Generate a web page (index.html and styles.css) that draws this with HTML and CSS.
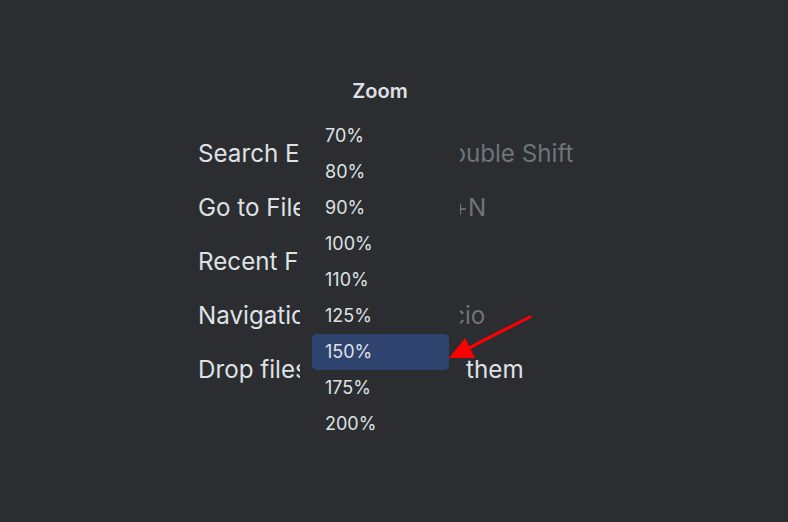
FILE: index.html
```html
<!DOCTYPE html>
<html>
<head>
<meta charset="utf-8">
<link rel="stylesheet" href="styles.css">
</head>
<body>
<div class="screen">
  <div class="hints">
    <div class="hint"><span class="label">Search Everywhere</span><span class="key">Double Shift</span></div>
    <div class="hint"><span class="label">Go to File</span><span class="key">Ctrl+Mayús+N</span></div>
    <div class="hint"><span class="label">Recent Files</span><span class="key">Ctrl+E</span></div>
    <div class="hint"><span class="label">Navigation Bar</span><span class="key">Alt+Inicio</span></div>
    <div class="hint"><span class="label">Drop files here to open them</span></div>
  </div>

  <div class="popup">
    <div class="popup-title">Zoom</div>
    <ul class="menu">
      <li class="item">70%</li>
      <li class="item">80%</li>
      <li class="item">90%</li>
      <li class="item">100%</li>
      <li class="item">110%</li>
      <li class="item">125%</li>
      <li class="item selected">150%</li>
      <li class="item">175%</li>
      <li class="item">200%</li>
    </ul>
  </div>

  <svg class="arrow" width="788" height="522" viewBox="0 0 788 522">
    <path d="M530 317 C 512 326, 480 342, 458 354" fill="none" stroke="#f00" stroke-width="3" stroke-linecap="round"/>
    <polygon points="449,358 465,338 475,358" fill="#f00"/>
  </svg>
</div>
</body>
</html>
```

FILE: styles.css
```css
html, body {
  margin: 0;
  padding: 0;
  background: #2b2d30;
}
.screen {
  position: relative;
  width: 788px;
  height: 522px;
  overflow: hidden;
  font-family: Inter, "Noto Sans", sans-serif;
  color: #dfe1e5;
}
.hints {
  padding: 127px 0 0 198px;
}
.hint {
  height: 54px;
  line-height: 54px;
  font-size: 24.2px;
  white-space: nowrap;
}
.key {
  color: #6f737a;
  margin-left: 13px;
}
.popup {
  position: absolute;
  left: 300px;
  top: 66px;
  width: 160px;
  background: #2b2d30;
  padding-bottom: 12px;
}
.popup-title {
  height: 50px;
  line-height: 50px;
  text-align: center;
  font-size: 20px;
  font-weight: 600;
}
.menu {
  list-style: none;
  margin: 0;
  padding: 2px 0 0 0;
}
.item {
  height: 36px;
  line-height: 36px;
  margin: 0 11px 0 12px;
  padding-left: 13px;
  font-size: 18px;
  border-radius: 5px;
}
.item.selected {
  background: #2e436e;
}
.arrow {
  position: absolute;
  left: 0;
  top: 0;
  pointer-events: none;
}
```
